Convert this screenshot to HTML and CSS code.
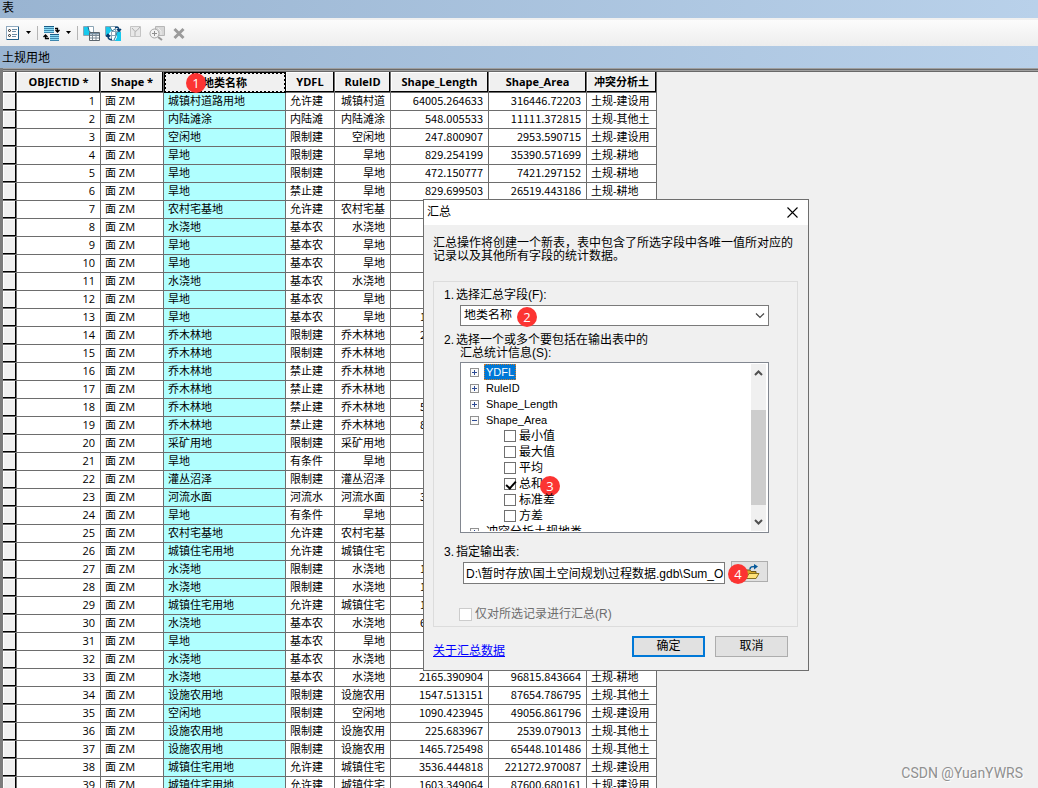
FILE: index.html
```html
<!DOCTYPE html>
<html lang="zh-CN">
<head>
<meta charset="utf-8">
<title>表</title>
<link rel="stylesheet" href="styles.css">
</head>
<body>
<div class="window">
  <header class="titlebar">表</header>
  <div class="toolbar">
    <button class="tool tool-options" aria-label="表选项">
      <svg width="14" height="15" viewBox="0 0 14 15"><rect x=".5" y=".5" width="12" height="13" fill="#fdfdfd" stroke="#8fa9bf"/><path d="M12.500 1v12.500H1" fill="none" stroke="#1d5b86"/><circle cx="3.500" cy="4.500" r="1" fill="none" stroke="#222"/><circle cx="3.500" cy="9.500" r="1" fill="none" stroke="#222"/><path d="M6 3.500h5M6 5.500h4M6 8.500h5M6 10.500h4" stroke="#6d8ca6"/></svg>
    </button>
    <button class="tool" aria-label="更多表选项"><svg width="7" height="4" viewBox="0 0 7 4"><path d="M1 0h5L3.500 3z" fill="#000"/></svg></button>
    <span class="separator"></span>
    <button class="tool" aria-label="关联表">
      <svg width="17" height="17" viewBox="0 0 17 17"><path d="M1 1h10v6H1zM7 9h9v6H7z" fill="#8bdcf5"/><path d="M1 1.500h10M7 9.500h9" stroke="#1b5b86"/><path d="M1 3.500h10M1 5.500h10M1 7.500h10M7 11.500h9M7 13.500h9M7 15.500h9" stroke="#3d86ad"/><path d="M12 3.500h2.500V6M12.500 5l2 2 2-2M6 13.500H2.500V11M.5 12l2-2 2 2" fill="none" stroke="#000" stroke-width="1.300"/></svg>
    </button>
    <button class="tool" aria-label="更多关联"><svg width="7" height="4" viewBox="0 0 7 4"><path d="M1 0h5L3.500 3z" fill="#000"/></svg></button>
    <span class="separator"></span>
    <button class="tool" aria-label="按属性选择">
      <svg width="17" height="17" viewBox="0 0 17 17"><path d="M.5 1.500h10v9H.5z" fill="#fff" stroke="#8ba4b4"/><path d="M1 2h4l1 4 3 4H1z" fill="#17c9ed"/><path d="M5 1.500l1 4 3 4" fill="none" stroke="#186586"/><path d="M6.500 7.500h10v8h-10z" fill="#fff" stroke="#5b656d"/><path d="M7 8h9v1.500H7z" fill="#7a93a6"/><path d="M7 10.500h9M7 13h9M9.500 9v6M13 9v6" stroke="#7c8b96"/></svg>
    </button>
    <button class="tool" aria-label="切换选择">
      <svg width="17" height="17" viewBox="0 0 17 17"><path d="M.5 1.500h10v9H.5zM6.500 6.500h9v9h-9z" fill="#fff" stroke="#8ba4b4"/><path d="M1 2h4l1 4-3 4H1zM12 7h4v9h-6l2-4z" fill="#17c9ed"/><path d="M5 2l2 4 3-2M12 7l-1 4-2 4" fill="none" stroke="#287997"/><path d="M10 2.500c3-1 4 0 4 3M12 4l2 2 2-2M7 14.500c-3 .5-4-1-4-4M1 11.500l2-2 2 2" fill="none" stroke="#083e70" stroke-width="1.600"/></svg>
    </button>
    <button class="tool" aria-label="清除选择" disabled>
      <svg width="17" height="17" viewBox="0 0 17 17"><path d="M3.500 1.500h10v10h-10z" fill="#e8e8e8" stroke="#c4c4c4"/><path d="M5 3l3 3.500V11M8 6.500l2-1L13 2" fill="none" stroke="#b0b0b0"/></svg>
    </button>
    <button class="tool" aria-label="缩放至所选" disabled>
      <svg width="17" height="17" viewBox="0 0 17 17"><path d="M6.500 1.500h9v9h-9z" fill="#d7d7d7" stroke="#b6b6b6"/><path d="M9 3l3 3v4" fill="none" stroke="#eee"/><circle cx="5.500" cy="8.500" r="4.500" fill="#f3f3f3" stroke="#a6a6a6"/><path d="M3 8.500h5M5.500 6v5" stroke="#8f8f8f"/><path d="M9 12l4 3" stroke="#999" stroke-width="2"/></svg>
    </button>
    <button class="tool" aria-label="删除所选" disabled>
      <svg width="17" height="17" viewBox="0 0 17 17"><path d="M3.500 4l9 9M12.500 4l-9 9" stroke="#9b9b9b" stroke-width="3"/></svg>
    </button>
  </div>
  <h1 class="layer-name">土规用地</h1>
  <main class="sheet">
    <table class="grid">
      <colgroup><col class="c-sel"><col class="c-id"><col class="c-shape"><col class="c-name"><col class="c-ydfl"><col class="c-rule"><col class="c-num"><col class="c-num"><col class="c-last"></colgroup>
      <thead><tr><th></th><th>OBJECTID *</th><th>Shape *</th><th class="active">地类名称<span class="badge badge-1">1</span></th><th>YDFL</th><th>RuleID</th><th>Shape_Length</th><th>Shape_Area</th><th>冲突分析土</th></tr></thead>
      <tbody>
      <tr><th></th><td>1</td><td>面 ZM</td><td>城镇村道路用地</td><td>允许建</td><td>城镇村道</td><td>64005.264633</td><td>316446.72203</td><td>土规-建设用</td></tr>
      <tr><th></th><td>2</td><td>面 ZM</td><td>内陆滩涂</td><td>内陆滩</td><td>内陆滩涂</td><td>548.005533</td><td>11111.372815</td><td>土规-其他土</td></tr>
      <tr><th></th><td>3</td><td>面 ZM</td><td>空闲地</td><td>限制建</td><td>空闲地</td><td>247.800907</td><td>2953.590715</td><td>土规-建设用</td></tr>
      <tr><th></th><td>4</td><td>面 ZM</td><td>旱地</td><td>限制建</td><td>旱地</td><td>829.254199</td><td>35390.571699</td><td>土规-耕地</td></tr>
      <tr><th></th><td>5</td><td>面 ZM</td><td>旱地</td><td>限制建</td><td>旱地</td><td>472.150777</td><td>7421.297152</td><td>土规-耕地</td></tr>
      <tr><th></th><td>6</td><td>面 ZM</td><td>旱地</td><td>禁止建</td><td>旱地</td><td>829.699503</td><td>26519.443186</td><td>土规-耕地</td></tr>
      <tr><th></th><td>7</td><td>面 ZM</td><td>农村宅基地</td><td>允许建</td><td>农村宅基</td><td></td><td></td><td></td></tr>
      <tr><th></th><td>8</td><td>面 ZM</td><td>水浇地</td><td>基本农</td><td>水浇地</td><td></td><td></td><td></td></tr>
      <tr><th></th><td>9</td><td>面 ZM</td><td>旱地</td><td>基本农</td><td>旱地</td><td></td><td></td><td></td></tr>
      <tr><th></th><td>10</td><td>面 ZM</td><td>旱地</td><td>基本农</td><td>旱地</td><td></td><td></td><td></td></tr>
      <tr><th></th><td>11</td><td>面 ZM</td><td>水浇地</td><td>基本农</td><td>水浇地</td><td></td><td></td><td></td></tr>
      <tr><th></th><td>12</td><td>面 ZM</td><td>旱地</td><td>基本农</td><td>旱地</td><td></td><td></td><td></td></tr>
      <tr><th></th><td>13</td><td>面 ZM</td><td>旱地</td><td>基本农</td><td>旱地</td><td class="leading">1</td><td></td><td></td></tr>
      <tr><th></th><td>14</td><td>面 ZM</td><td>乔木林地</td><td>限制建</td><td>乔木林地</td><td class="leading">2</td><td></td><td></td></tr>
      <tr><th></th><td>15</td><td>面 ZM</td><td>乔木林地</td><td>限制建</td><td>乔木林地</td><td></td><td></td><td></td></tr>
      <tr><th></th><td>16</td><td>面 ZM</td><td>乔木林地</td><td>禁止建</td><td>乔木林地</td><td></td><td></td><td></td></tr>
      <tr><th></th><td>17</td><td>面 ZM</td><td>乔木林地</td><td>禁止建</td><td>乔木林地</td><td></td><td></td><td></td></tr>
      <tr><th></th><td>18</td><td>面 ZM</td><td>乔木林地</td><td>禁止建</td><td>乔木林地</td><td class="leading">5</td><td></td><td></td></tr>
      <tr><th></th><td>19</td><td>面 ZM</td><td>乔木林地</td><td>禁止建</td><td>乔木林地</td><td class="leading">8</td><td></td><td></td></tr>
      <tr><th></th><td>20</td><td>面 ZM</td><td>采矿用地</td><td>限制建</td><td>采矿用地</td><td></td><td></td><td></td></tr>
      <tr><th></th><td>21</td><td>面 ZM</td><td>旱地</td><td>有条件</td><td>旱地</td><td></td><td></td><td></td></tr>
      <tr><th></th><td>22</td><td>面 ZM</td><td>灌丛沼泽</td><td>限制建</td><td>灌丛沼泽</td><td></td><td></td><td></td></tr>
      <tr><th></th><td>23</td><td>面 ZM</td><td>河流水面</td><td>河流水</td><td>河流水面</td><td class="leading">3</td><td></td><td></td></tr>
      <tr><th></th><td>24</td><td>面 ZM</td><td>旱地</td><td>有条件</td><td>旱地</td><td></td><td></td><td></td></tr>
      <tr><th></th><td>25</td><td>面 ZM</td><td>农村宅基地</td><td>允许建</td><td>农村宅基</td><td></td><td></td><td></td></tr>
      <tr><th></th><td>26</td><td>面 ZM</td><td>城镇住宅用地</td><td>允许建</td><td>城镇住宅</td><td></td><td></td><td></td></tr>
      <tr><th></th><td>27</td><td>面 ZM</td><td>水浇地</td><td>限制建</td><td>水浇地</td><td class="leading">1</td><td></td><td></td></tr>
      <tr><th></th><td>28</td><td>面 ZM</td><td>水浇地</td><td>限制建</td><td>水浇地</td><td class="leading">1</td><td></td><td></td></tr>
      <tr><th></th><td>29</td><td>面 ZM</td><td>城镇住宅用地</td><td>允许建</td><td>城镇住宅</td><td class="leading">1</td><td></td><td></td></tr>
      <tr><th></th><td>30</td><td>面 ZM</td><td>水浇地</td><td>基本农</td><td>水浇地</td><td class="leading">6</td><td></td><td></td></tr>
      <tr><th></th><td>31</td><td>面 ZM</td><td>旱地</td><td>基本农</td><td>旱地</td><td></td><td></td><td></td></tr>
      <tr><th></th><td>32</td><td>面 ZM</td><td>水浇地</td><td>基本农</td><td>水浇地</td><td></td><td></td><td></td></tr>
      <tr><th></th><td>33</td><td>面 ZM</td><td>水浇地</td><td>基本农</td><td>水浇地</td><td>2165.390904</td><td>96815.843664</td><td>土规-耕地</td></tr>
      <tr><th></th><td>34</td><td>面 ZM</td><td>设施农用地</td><td>限制建</td><td>设施农用</td><td>1547.513151</td><td>87654.786795</td><td>土规-其他土</td></tr>
      <tr><th></th><td>35</td><td>面 ZM</td><td>空闲地</td><td>限制建</td><td>空闲地</td><td>1090.423945</td><td>49056.861796</td><td>土规-建设用</td></tr>
      <tr><th></th><td>36</td><td>面 ZM</td><td>设施农用地</td><td>限制建</td><td>设施农用</td><td>225.683967</td><td>2539.079013</td><td>土规-其他土</td></tr>
      <tr><th></th><td>37</td><td>面 ZM</td><td>设施农用地</td><td>限制建</td><td>设施农用</td><td>1465.725498</td><td>65448.101486</td><td>土规-其他土</td></tr>
      <tr><th></th><td>38</td><td>面 ZM</td><td>城镇住宅用地</td><td>允许建</td><td>城镇住宅</td><td>3536.444818</td><td>221272.970087</td><td>土规-建设用</td></tr>
      <tr><th></th><td>39</td><td>面 ZM</td><td>城镇住宅用地</td><td>允许建</td><td>城镇住宅</td><td>1603.349064</td><td>87600.680161</td><td>土规-建设用</td></tr>
      </tbody>
    </table>
  </main>

  <section class="dialog" role="dialog" aria-labelledby="dlg-title">
    <header class="dialog-title">
      <h2 id="dlg-title">汇总</h2>
      <button class="close" aria-label="关闭"><svg width="11" height="11" viewBox="0 0 11 11"><path d="M.5.5l10 10M10.500.5l-10 10" stroke="#000" stroke-width="1.100"/></svg></button>
    </header>
    <div class="dialog-body">
      <p class="intro">汇总操作将创建一个新表，表中包含了所选字段中各唯一值所对应的记录以及其他所有字段的统计数据。</p>
      <div class="group">
        <div class="step"><span class="num">1.</span><label for="field">选择汇总字段(F):</label></div>
        <div class="field select-box">
          <select id="field"><option>地类名称</option></select>
          <svg class="chevron" width="10" height="6" viewBox="0 0 10 6"><path d="M1 .5l4 4 4-4" fill="none" stroke="#444" stroke-width="1.200"/></svg>
          <span class="badge badge-2">2</span>
        </div>
        <div class="step step-2"><span class="num">2.</span><span>选择一个或多个要包括在输出表中的<br><span class="second-line">汇总统计信息(S):</span></span></div>
        <div class="field tree-box">
          <ul class="tree">
            <li><button class="expander" aria-label="展开"><svg width="9" height="9" viewBox="0 0 9 9"><rect x=".5" y=".5" width="8" height="8" fill="#fafafa" stroke="#919191"/><path d="M2 4.500h5M4.500 2v5" stroke="#2c4a94"/></svg></button><span class="selected">YDFL</span></li>
            <li><button class="expander" aria-label="展开"><svg width="9" height="9" viewBox="0 0 9 9"><rect x=".5" y=".5" width="8" height="8" fill="#fafafa" stroke="#919191"/><path d="M2 4.500h5M4.500 2v5" stroke="#2c4a94"/></svg></button><span class="node">RuleID</span></li>
            <li><button class="expander" aria-label="展开"><svg width="9" height="9" viewBox="0 0 9 9"><rect x=".5" y=".5" width="8" height="8" fill="#fafafa" stroke="#919191"/><path d="M2 4.500h5M4.500 2v5" stroke="#2c4a94"/></svg></button><span class="node">Shape_Length</span></li>
            <li><button class="expander" aria-label="折叠"><svg width="9" height="9" viewBox="0 0 9 9"><rect x=".5" y=".5" width="8" height="8" fill="#fafafa" stroke="#919191"/><path d="M2 4.500h5" stroke="#2c4a94"/></svg></button><span class="node">Shape_Area</span></li>
            <li class="leaf"><label><input type="checkbox" class="check">最小值</label></li>
            <li class="leaf"><label><input type="checkbox" class="check">最大值</label></li>
            <li class="leaf"><label><input type="checkbox" class="check">平均</label></li>
            <li class="leaf"><label><input type="checkbox" class="check" checked>总和</label><span class="badge badge-3">3</span></li>
            <li class="leaf"><label><input type="checkbox" class="check">标准差</label></li>
            <li class="leaf"><label><input type="checkbox" class="check">方差</label></li>
            <li><button class="expander" aria-label="展开"><svg width="9" height="9" viewBox="0 0 9 9"><rect x=".5" y=".5" width="8" height="8" fill="#fafafa" stroke="#919191"/><path d="M2 4.500h5M4.500 2v5" stroke="#2c4a94"/></svg></button><span class="node">冲突分析土规地类</span></li>
          </ul>
          <div class="scrollbar">
            <svg width="9" height="6" viewBox="0 0 9 6"><path d="M1 5l3.500-3.500L8 5" fill="none" stroke="#505050" stroke-width="2"/></svg>
            <div class="track"><div class="thumb"></div></div>
            <svg width="9" height="6" viewBox="0 0 9 6"><path d="M1 1l3.500 3.500L8 1" fill="none" stroke="#505050" stroke-width="2"/></svg>
          </div>
        </div>
        <div class="step step-3"><span class="num">3.</span><label for="output">指定输出表:</label></div>
        <div class="output-row">
          <input id="output" class="output" type="text" value="D:\暂时存放\国土空间规划\过程数据.gdb\Sum_O">
          <button class="browse" aria-label="浏览">
            <svg width="16" height="16" viewBox="0 0 16 16"><path d="M2 6h4l1 1.500h5V14H2z" fill="#d6a928" stroke="#6f5a18"/><path d="M2 14.500l3-5h10l-3 5z" fill="#ffe37a" stroke="#86701d"/><path d="M6 5.500c0-3 2-3 5-3" fill="none" stroke="#07599a" stroke-width="1.600"/><path d="M10 0l4 2.500L10 5.500z" fill="#07599a"/></svg>
          </button>
          <span class="badge badge-4">4</span>
        </div>
        <label class="only-selected"><input type="checkbox" class="check" disabled>仅对所选记录进行汇总(R)</label>
      </div>
      <footer class="actions">
        <a href="#">关于汇总数据</a>
        <button class="btn btn-default">确定</button>
        <button class="btn">取消</button>
      </footer>
    </div>
  </section>
  <div class="watermark">CSDN @YuanYWRS</div>
</div>
</body>
</html>
```
FILE: styles.css
```css
* { box-sizing: border-box; }
body { margin: 0; background: #f0f0f0; color: #000; font: 12px/13px "Liberation Sans", "Noto Sans CJK SC", sans-serif; }
button, input, select { font: inherit; color: inherit; margin: 0; }
svg { display: block; }

.window { position: relative; display: flex; flex-direction: column; height: 100vh; overflow: hidden; }
.titlebar, .layer-name { flex: none; margin: 0; padding: 0 2px; font-size: 12px; font-weight: 400; background: linear-gradient(90deg, #99b4d1, #b9d1ea); }
.titlebar { height: 18px; line-height: 16px; }
.layer-name { height: 22px; line-height: 24px; }

.toolbar { flex: none; display: flex; align-items: center; gap: 5px; height: 28px; padding: 0 6px; background: linear-gradient(#fcfcfc, #ededed); border-top: 2px solid #f0f0f0; }
.tool { padding: 0; border: 0; background: none; }
.separator { width: 1px; height: 14px; background: #b5b5b5; }

.sheet { flex: 1; min-height: 0; overflow: hidden; padding-top: 4px; border-left: 3px solid #7c7c7c; background: linear-gradient(#a0a0a0 0 1px, #696969 1px 2px, #a0a0a0 2px 3px, #696969 3px 4px, #f0f0f0 4px); }
.grid { width: 654px; table-layout: fixed; border-collapse: separate; border-spacing: 0; background: #fff; font: 11px/15px "Open Sans", "Noto Sans CJK SC", sans-serif; }
.c-sel { width: 14px; }
.c-id { width: 84px; }
.c-shape { width: 63px; }
.c-name { width: 122px; }
.c-ydfl { width: 49px; }
.c-rule { width: 56px; }
.c-num { width: 98px; }
.c-last { width: 70px; }
.grid th, .grid td { height: 18px; padding: 0 4px 2px; overflow: hidden; white-space: nowrap; text-align: left; border-right: 1px solid #6d6d6d; border-bottom: 1px solid #6d6d6d; }
.grid th { background: #f0f0f0; box-shadow: inset -1px -1px #000, inset 1px 1px #fff; text-align: center; }
.grid thead th { height: 21px; padding: 0 0 2px; }
.grid thead th.active { position: relative; overflow: visible; outline: 1px solid #000; outline-offset: -1px; box-shadow: none; border: 2px dotted #000; padding: 0; }
.grid td:nth-child(2), .grid td:nth-child(6), .grid td:nth-child(7), .grid td:nth-child(8) { text-align: right; padding-right: 5px; }
.grid td:nth-child(4) { background: #b0ffff; }
.grid td:nth-child(7), .grid td:nth-child(8) { font-family: "Noto Sans CJK SC", sans-serif; }
.grid tbody td.leading { padding-right: 62px; }

.badge { position: absolute; width: 20px; height: 20px; border-radius: 50%; background: #fc3432; color: #fff; font: 13px/20px "Open Sans", sans-serif; text-align: center; }
.badge-1 { left: 20px; top: -1px; }
.badge-2 { left: 57px; top: 2px; }
.badge-3 { left: 70px; top: 0; }
.badge-4 { left: 265px; top: 3px; }

.dialog { position: absolute; left: 423px; top: 199px; width: 386px; border: 1px solid #6e6e6e; background: #f0f0f0; }
.dialog-title { display: flex; align-items: center; justify-content: space-between; height: 25px; padding: 0 10px 0 3px; background: #fff; }
.dialog-title h2 { margin: 0; font-size: 12px; font-weight: 400; }
.close { padding: 0; border: 0; background: none; }
.dialog-body { padding: 12px 10px 12px 9px; }
.intro { margin: 0 0 18px; width: 364px; }
.group { height: 346px; padding: 7px 28px 0 10px; border: 1px solid #dcdcdc; }
.step { display: flex; }
.num { width: 12px; flex: none; }
.second-line { margin-left: 4px; }
.field { position: relative; margin-left: 16px; }
.select-box { margin-top: 3px; }
.select-box select { display: block; width: 100%; height: 21px; padding: 0 3px; border: 1px solid #7a7a7a; border-radius: 0; background: #fff; appearance: none; }
.chevron { position: absolute; right: 4px; top: 8px; pointer-events: none; }
.step-2 { margin-top: 8px; }
.tree-box { display: flex; height: 171px; margin-top: 2px; padding: 1px 2px 1px 0; border: 1px solid #828790; background: #fff; }
.tree { flex: 1; margin: 0; padding: 0 0 0 9px; height: 167px; overflow: hidden; list-style: none; font-size: 12px; }
.tree li { position: relative; display: flex; align-items: center; height: 16px; }
.tree label { display: flex; align-items: center; gap: 3px; }
.expander { margin-right: 5px; padding: 0; border: 0; background: none; }
.selected { padding: 0 2px; line-height: 16px; font-size: 11px; color: #fff; background: #0078d7; outline: 1px dotted #d07a28; outline-offset: -1px; }
.node { padding: 0 2px; font-size: 11px; }
.tree li:last-child .node { font-size: 12px; }
.leaf { padding-left: 34px; }
.check { flex: none; width: 12px; height: 12px; appearance: none; border: 1px solid #707070; background: #fff; }
.check:checked::after { content: ""; display: block; width: 4px; height: 8px; margin: 0 0 0 3px; border: solid #000; border-width: 0 2px 2px 0; transform: rotate(42deg); }
.check:disabled { width: 13px; height: 13px; border-color: #ccc; }
.scrollbar { display: flex; flex-direction: column; align-items: center; width: 15px; padding: 6px 0; background: #f0f0f0; }
.track { flex: 1; width: 100%; padding-top: 34px; }
.thumb { height: 95px; background: #cdcdcd; }
.step-3 { margin-top: 13px; }
.output-row { position: relative; display: flex; justify-content: space-between; align-items: flex-start; margin: 2px 1px 0 19px; }
.output { width: 262px; height: 22px; margin-top: 1px; padding: 0 0 2px 2px; border: 1px solid #7a7a7a; background: #fff; }
.browse { width: 37px; height: 21px; padding: 0 0 0 12px; border: 1px solid #adadad; background: #e1e1e1; }
.only-selected { display: flex; align-items: center; gap: 3px; margin: 24px 0 0 15px; color: #6d6d6d; }
.actions { display: flex; align-items: center; gap: 10px; margin-top: 8px; padding-right: 10px; }
.actions a { margin-right: auto; padding-top: 10px; color: #00f; }
.btn { width: 73px; height: 21px; padding: 0; border: 1px solid #adadad; background: #e1e1e1; }
.btn-default { border: 2px solid #0078d7; }

.watermark { position: absolute; right: 15px; bottom: 7px; color: #909090; font: 14px/16px Roboto, sans-serif; text-shadow: 1px 1px #fff; }
```
